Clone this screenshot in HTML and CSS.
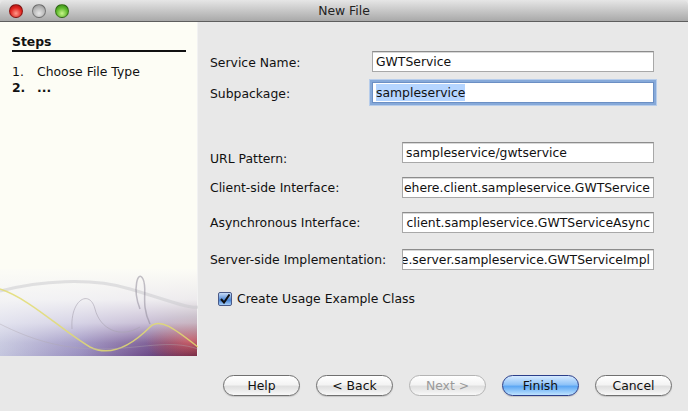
FILE: index.html
```html
<!DOCTYPE html>
<html>
<head>
<meta charset="utf-8">
<link rel="stylesheet" href="styles.css">
</head>
<body>
<div class="window">
  <div class="titlebar">
    <div class="lights">
      <span class="light red"></span>
      <span class="light grey"></span>
      <span class="light green"></span>
    </div>
    <div class="title">New File</div>
  </div>
  <div class="main">
    <div class="steps">
      <div class="steps-head">Steps</div>
      <ol class="step-list">
        <li><span class="num">1.</span><span>Choose File Type</span></li>
        <li class="current"><span class="num">2.</span><span>...</span></li>
      </ol>
      <div class="art">
        <svg class="swirl" width="198" height="87" viewBox="0 0 198 87">
          <path d="M0 22 C40 12 90 8 130 20 S190 40 198 38" fill="none" stroke="#c8c8cc" stroke-width="3" opacity="0.5"/>
          <path d="M0 20 C30 30 60 60 90 78 C110 88 130 78 150 58 C160 48 175 60 198 78" fill="none" stroke="#e2dc70" stroke-width="1.5" opacity="0.85"/>
          <path d="M72 60 C70 30 90 20 95 40 C100 60 120 70 140 58" fill="none" stroke="#a8a4b0" stroke-width="1" opacity="0.6"/>
          <path d="M140 40 C132 20 138 0 143 10 C148 20 140 35 150 55" fill="none" stroke="#8a8494" stroke-width="1.5" opacity="0.5"/>
          <path d="M0 55 C30 70 60 80 100 80 C140 80 170 70 198 80" fill="none" stroke="#b0a8b0" stroke-width="1" opacity="0.4"/>
        </svg>
      </div>
    </div>
    <div class="content">
      <div class="group group-top">
        <div class="row">
          <label class="lbl">Service Name:</label>
          <div class="field">GWTService</div>
        </div>
        <div class="row">
          <label class="lbl">Subpackage:</label>
          <div class="field focus"><span class="sel">sampleservice</span></div>
        </div>
      </div>
      <div class="group group-bottom">
        <div class="row">
          <label class="lbl low">URL Pattern:</label>
          <div class="field">sampleservice/gwtservice</div>
        </div>
        <div class="row">
          <label class="lbl">Client-side Interface:</label>
          <div class="field end"><span>ehere.client.sampleservice.GWTService</span></div>
        </div>
        <div class="row">
          <label class="lbl">Asynchronous Interface:</label>
          <div class="field end"><span>client.sampleservice.GWTServiceAsync</span></div>
        </div>
        <div class="row">
          <label class="lbl">Server-side Implementation:</label>
          <div class="field end"><span>e.server.sampleservice.GWTServiceImpl</span></div>
        </div>
      </div>
      <div class="check-row">
        <span class="checkbox">
          <svg width="10" height="10" viewBox="0 0 10 10"><path d="M1 5 L4 8.5 L9.5 0.5" fill="none" stroke="#111" stroke-width="2"/></svg>
        </span>
        <span>Create Usage Example Class</span>
      </div>
    </div>
  </div>
  <div class="footer">
    <button class="btn">Help</button>
    <button class="btn">&lt; Back</button>
    <button class="btn disabled">Next &gt;</button>
    <button class="btn primary">Finish</button>
    <button class="btn">Cancel</button>
  </div>
</div>
</body>
</html>
```

FILE: styles.css
```css
* { box-sizing: border-box; }
html, body { margin: 0; padding: 0; }
body {
  width: 688px;
  height: 411px;
  overflow: hidden;
  font-family: "DejaVu Sans", "Lucida Grande", sans-serif;
  font-size: 12.4px;
  color: #111;
  background: #e8e8e8;
}
.window { width: 688px; height: 411px; display: flex; flex-direction: column; }
.titlebar {
  height: 22px;
  flex: none;
  background: linear-gradient(#e6e6e6, #a9a9a9);
  border-bottom: 1px solid #5e5e5e;
  border-radius: 5px 5px 0 0;
  display: flex;
  align-items: center;
  position: relative;
}
.lights { display: flex; gap: 9px; padding-left: 9px; }
.light {
  width: 14px; height: 14px; border-radius: 50%;
  border: 1px solid rgba(0,0,0,0.35);
}
.red { background: radial-gradient(circle at 50% 70%, #ff9a8a 0%, #e0231e 55%, #9a1010 100%); }
.grey { background: radial-gradient(circle at 50% 70%, #e6e6e6 0%, #b8b8b8 55%, #8c8c8c 100%); }
.green { background: radial-gradient(circle at 50% 70%, #c8f58a 0%, #5cb82a 55%, #2e7a12 100%); }
.title {
  position: absolute; left: 0; right: 0; top: 0; height: 22px;
  text-align: center; line-height: 22px; font-size: 12.4px; color: #222;
  pointer-events: none;
}
.main { display: flex; height: 334px; flex: none; }
.steps {
  width: 198px; flex: none;
  background: #fdfdf5;
  display: flex; flex-direction: column;
  border-right: 1px solid #f2f2f2;
}
.steps-head {
  margin: 13px 11px 0 12px;
  font-weight: bold;
  padding-bottom: 1px;
  border-bottom: 2px solid #111;
  line-height: 14px;
}
.step-list { list-style: none; margin: 12px 0 0 0; padding: 0 0 0 12px; }
.step-list li { display: flex; line-height: 16px; }
.step-list .num { width: 25px; }
.step-list .current { font-weight: bold; }
.art {
  margin-top: auto;
  height: 87px;
  position: relative;
  background:
    linear-gradient(to bottom, #fcfcf6 0%, rgba(246,246,246,0.95) 35%, rgba(240,240,246,0.7) 62%, rgba(240,240,246,0.15) 85%, rgba(255,255,255,0) 100%),
    radial-gradient(ellipse 45px 25px at 190px 72px, rgba(205,70,80,0.9), rgba(205,70,80,0) 100%),
    linear-gradient(to right, #c4c6de 0%, #9a90c0 40%, #6e4c8a 75%, #4a2040 100%);
}
.swirl { position: absolute; left: 0; top: 0; }
.content { flex: 1; min-width: 0; padding: 29px 34px 0 12px; }
.row { display: flex; align-items: center; }
.group-top .row { height: 21px; }
.group-top .row + .row { margin-top: 10px; }
.group-top .lbl { width: 162px; }
.group-bottom { margin-top: 38px; }
.group-bottom .row { height: 22px; }
.group-bottom .row + .row { margin-top: 13px; }
.group-bottom .row:last-child { margin-top: 15px; }
.group-bottom .lbl { width: 192px; }
.lbl { flex: none; padding-top: 1px; }
.lbl.low { padding-top: 12px; }
.field {
  flex: 1;
  min-width: 0;
  height: 21px;
  background: #fff;
  border: 1px solid #a8a8a8;
  border-top-color: #8c8c8c;
  box-shadow: inset 0 1px 0 #d8d8d8;
  padding: 0 3px;
  line-height: 19px;
  white-space: nowrap;
  overflow: hidden;
}
.field.end { display: flex; justify-content: flex-end; }
.field.end span { flex: none; }
.field.focus {
  box-shadow: 0 0 0 2px #86a9d9, 0 0 0 3px #b7cdeb;
  border-color: #6b8fc4;
}
.sel { background: #b5d5ff; padding: 1px 0; }
.check-row { display: flex; align-items: center; margin: 21px 0 0 8px; gap: 5px; }
.checkbox {
  width: 14px; height: 14px;
  border: 1px solid #4a5a88;
  border-radius: 2px;
  background: linear-gradient(#c8dcf6, #5e93da 50%, #4a86d8 60%, #a8d0f8);
  display: flex; align-items: center; justify-content: center;
}
.footer {
  flex: 1;
  display: flex;
  align-items: flex-start;
  padding: 19px 0 0 223px;
  gap: 16px;
}
.btn {
  width: 77px; height: 21px;
  border: 1px solid #707070;
  border-radius: 11px;
  background: linear-gradient(#ffffff 0%, #f4f4f4 45%, #e0e0e0 55%, #f8f8f8 100%);
  font-family: "DejaVu Sans", "Lucida Grande", sans-serif;
  font-size: 12.4px;
  color: #111;
  padding: 0;
  line-height: 19px;
  box-shadow: 0 1px 1px rgba(0,0,0,0.15);
}
.btn.disabled { border-color: #b4b4b4; color: #9a9a9a; box-shadow: none; }
.btn.primary {
  border-color: #2c3f8a;
  background: linear-gradient(#d6eaff 0%, #8fc3f8 45%, #5ea8f4 55%, #bfe3ff 100%);
}
```
